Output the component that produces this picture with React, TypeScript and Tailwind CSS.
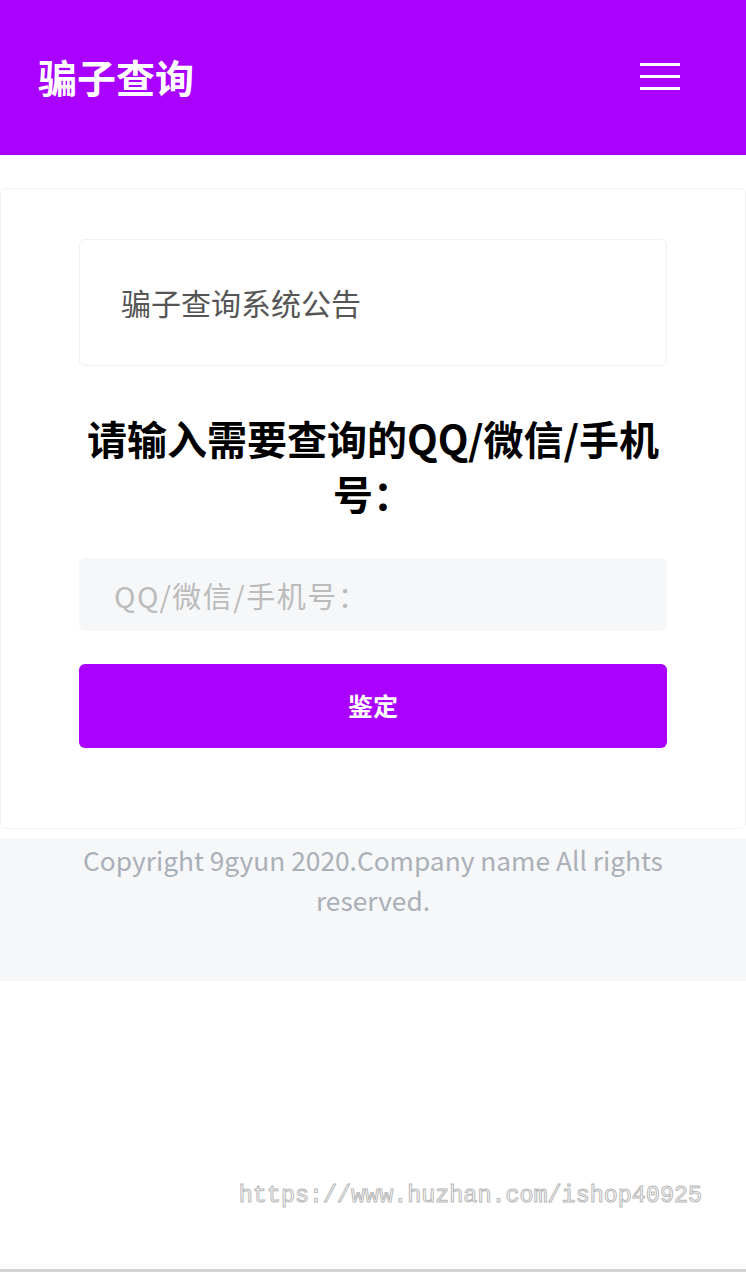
import React from 'react';

const cjk = { fontFamily: '"Noto Sans CJK SC", "Noto Sans", sans-serif' };

export default function App() {
  return (
    <div className="min-h-[1272px] bg-white flex flex-col" style={cjk}>
      <header className="h-[155px] bg-[#aa00ff] flex items-center justify-between pl-[38px] pr-[66px] pb-[3px]">
        <h1 className="text-[39px] font-bold text-white leading-none">骗子查询</h1>
        <button className="flex flex-col gap-[9px] w-[40px]">
          <span className="block h-[3px] bg-white" />
          <span className="block h-[3px] bg-white" />
          <span className="block h-[3px] bg-white" />
        </button>
      </header>

      <main className="mt-[33px] border border-[#f2f2f2] rounded-[6px] px-[78px] pt-[50px] pb-[80px]">
        <div className="h-[127px] border border-[#f0f0f0] rounded-[6px] flex items-center px-[41px]">
          <p className="text-[30px] text-[#555555]">骗子查询系统公告</p>
        </div>

        <h2 className="mt-[45px] text-center text-[40px] font-bold text-black leading-[55px] px-[4px]">
          请输入需要查询的QQ/微信/手机号：
        </h2>

        <input
          className="mt-[37px] w-full h-[73px] rounded-[6px] bg-[#f6f7f9] px-[35px] text-[29px] tracking-[1.5px] outline-none placeholder:text-[#bbbbbb]"
          placeholder="QQ/微信/手机号："
        />

        <button className="mt-[33px] w-full h-[84px] rounded-[6px] bg-[#aa00ff] text-white text-[25px] font-bold">
          鉴定
        </button>
      </main>

      <footer className="mt-[9px] h-[143px] bg-[#f6f7f9] text-center text-[26.3px] leading-[40px] text-[#aab0b8] px-[70px] pt-[2px]">
        Copyright 9gyun 2020.Company name All rights reserved.
      </footer>

      <div className="flex-1 flex items-end justify-end pr-[44px] pb-[55px]">
        <span
          className="text-[23.4px] text-transparent"
          style={{ fontFamily: '"Liberation Mono", monospace', WebkitTextStroke: '1px #b8b8b8' }}
        >
          https://www.huzhan.com/ishop40925
        </span>
      </div>
      <div className="h-[3px] bg-[#d4d4d4]" />
    </div>
  );
}
